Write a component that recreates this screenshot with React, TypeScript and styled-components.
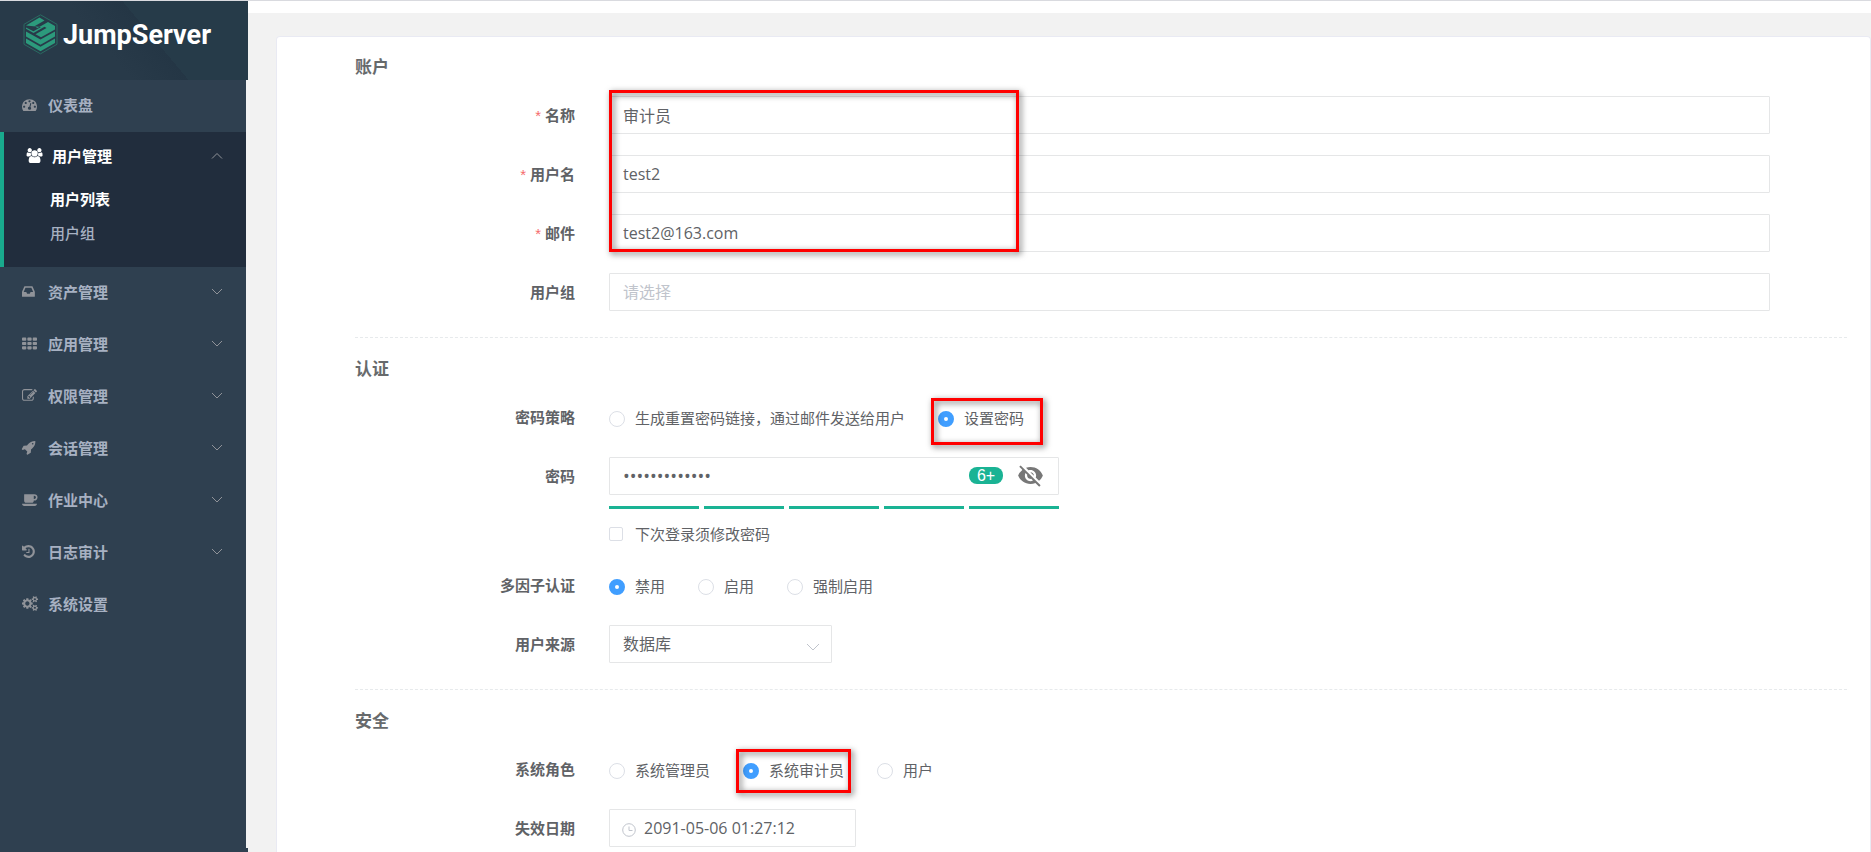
import React from 'react';
import styled, { createGlobalStyle, css } from 'styled-components';
import { MdVisibilityOff } from 'react-icons/md';

const GlobalStyle = createGlobalStyle`
  *, *::before, *::after { box-sizing: border-box; }
  body {
    margin: 0;
    background: #f2f2f2;
    color: #606266;
    font-family: 'Open Sans', 'Noto Sans CJK SC', sans-serif;
    font-size: 15px;
  }
  input, select, button { font: inherit; color: inherit; }
`;

/* ---------- shell ---------- */

const Shell = styled.div`
  display: flex;
  min-height: 100vh;
  border-top: 1px solid #d9dadf;
`;

const Sidebar = styled.aside`
  flex: none;
  display: flex;
  flex-direction: column;
  width: 248px;
  border-bottom: 4px solid #2f4050;
`;

const Brand = styled.a`
  display: flex;
  align-items: flex-start;
  gap: 5px;
  height: 79px;
  padding: 13px 0 0 23px;
  color: #fff;
  text-decoration: none;
  background: linear-gradient(50deg, #283a49 0 42%, #243645 60%, #263b49 60% 100%);
`;

const BrandName = styled.span`
  font: 700 27px/42px 'Liberation Sans Narrow', Roboto, sans-serif;
`;

const Nav = styled.nav`
  flex: 1;
  width: 246px;
  background: #2f4050;
  font-weight: 600;
  color: #a7b1c2;
`;

const MenuGroup = styled.div<{ $open?: boolean }>`
  ${(p) =>
    p.$open &&
    css`
      padding-bottom: 17px;
      border-left: 4px solid #19aa8d;
      background: #212d3d;
      color: #fff;
    `}
`;

const MenuButton = styled.button<{ $open?: boolean }>`
  display: flex;
  align-items: center;
  width: 100%;
  height: ${(p) => (p.$open ? 50 : 52)}px;
  padding: 0 23px 3px 22px;
  border: 0;
  background: none;
  font-weight: 700;
  text-align: left;
  cursor: pointer;
`;

const MenuIcon = styled.svg<{ $open?: boolean }>`
  flex: none;
  width: 17px;
  height: 15px;
  margin-right: 9px;
  overflow: visible;
  fill: ${(p) => (p.$open ? '#fff' : '#909399')};
`;

const MenuText = styled.span`
  flex: 1;
`;

const SubLink = styled.a<{ $active?: boolean }>`
  display: block;
  padding-left: 46px;
  line-height: 34px;
  font-weight: ${(p) => (p.$active ? 700 : 500)};
  color: ${(p) => (p.$active ? '#fff' : '#a7b1c2')};
  text-decoration: none;
`;

const Main = styled.main`
  flex: 1;
  display: flex;
  flex-direction: column;
  min-width: 0;
`;

const TopStrip = styled.div`
  height: 12px;
  background: #fff;
`;

const Card = styled.form`
  flex: 1;
  margin: 23px 0 0 28px;
  padding: 19px 23px 3px 78px;
  border: 1px solid #e9eaf3;
  border-bottom: 0;
  border-radius: 4px 4px 0 0;
  background: #fff;
`;

/* ---------- form ---------- */

const Section = styled.section`
  & + & {
    margin-top: 26px;
    padding-top: 20px;
    border-top: 1px dashed #e7eaec;
  }
`;

const SectionTitle = styled.h3`
  margin: 0 0 18px;
  font-size: 17px;
  line-height: 22px;
  font-weight: 700;
  color: #676a6c;
`;

const Rows = styled.div`
  position: relative;
  display: flex;
  flex-direction: column;
  gap: 21px;
  & + & {
    margin-top: 21px;
  }
`;

const Row = styled.div`
  display: grid;
  grid-template-columns: 220px minmax(0, 1fr);
  column-gap: 34px;
  padding-right: 77px;
`;

const Label = styled.label<{ $required?: boolean }>`
  height: 38px;
  line-height: 38px;
  font-weight: 700;
  text-align: right;
  ${(p) =>
    p.$required &&
    css`
      &::before {
        content: '*';
        margin-right: 4px;
        color: #f56c6c;
        font-family: 'Liberation Sans', sans-serif;
        font-weight: 400;
        line-height: 1;
      }
    `}
`;

const field = css`
  width: 100%;
  height: 38px;
  padding: 0 13px;
  border: 1px solid #e5e6e7;
  border-radius: 1px;
  outline: none;
  background: #fff;
  font-size: 16px;
  color: #606266;
`;

const TextInput = styled.input`
  ${field}
  &::placeholder {
    color: #c0c4cc;
    opacity: 1;
  }
`;

const PasswordInput = styled(TextInput)`
  font-size: 18px;
`;

const SelectInput = styled.select`
  ${field}
  appearance: none;
`;

const FieldBox = styled.div<{ $width: number }>`
  position: relative;
  width: ${(p) => p.$width}px;
  max-width: 100%;
`;

const SelectArrow = styled.svg`
  position: absolute;
  top: 18px;
  right: 12px;
  width: 14px;
  height: 8px;
  pointer-events: none;
`;

const ClockIcon = styled.svg`
  position: absolute;
  top: 14px;
  left: 13px;
  width: 14px;
  height: 14px;
`;

const DateInput = styled(TextInput)`
  padding-left: 34px;
`;

const PasswordTools = styled.div`
  position: absolute;
  top: 0;
  right: 15px;
  display: flex;
  align-items: center;
  gap: 14px;
  height: 36px;
`;

const LengthBadge = styled.span`
  width: 34px;
  border-radius: 8px;
  background: #1ab394;
  color: #fff;
  font: 16px/17px 'Liberation Sans', sans-serif;
  text-align: center;
`;

const EyeButton = styled.button`
  display: flex;
  padding: 0;
  border: 0;
  background: none;
  color: #777;
  font-size: 27px;
`;

const StrengthBar = styled.div`
  display: grid;
  grid-template-columns: 9fr 8fr 9fr 8fr 9fr;
  gap: 5px;
  margin-top: 11px;
`;

const StrengthStep = styled.span`
  height: 3px;
  background: #1ab394;
`;

const Options = styled.div`
  display: flex;
  flex-wrap: wrap;
  gap: 0 33px;
`;

const Option = styled.label`
  position: relative;
  display: flex;
  align-items: center;
  gap: 10px;
  height: 38px;
  cursor: pointer;
`;

const RadioDot = styled.input`
  appearance: none;
  width: 16px;
  height: 16px;
  margin: 4px 0 0;
  border: 1px solid #dcdfe6;
  border-radius: 50%;
  background: #fff;
  &:checked {
    border: 6px solid #409eff;
  }
`;

const CheckOption = styled(Option)`
  height: 24px;
  margin-top: 12px;
`;

const CheckBox = styled.input`
  appearance: none;
  width: 14px;
  height: 14px;
  margin: 2px 2px 0 0;
  border: 1px solid #dcdfe6;
  border-radius: 2px;
  background: #fff;
`;

const Callout = styled.span<{ $inset: string; $width?: number }>`
  position: absolute;
  inset: ${(p) => p.$inset};
  width: ${(p) => (p.$width ? `${p.$width}px` : 'auto')};
  border: 3px solid #f00;
  filter: drop-shadow(2px 2px 3px rgba(0, 0, 0, 0.6));
  pointer-events: none;
`;

/* ---------- drawings ---------- */

type Glyph = { box: number; d: string; x?: number };

const glyphs: Record<string, Glyph> = {
  dashboard: {
    box: 1792,
    d: 'M384 1152q0-53-37.5-90.5t-90.5-37.5-90.5 37.5-37.5 90.5 37.5 90.5 90.5 37.5 90.5-37.5 37.5-90.5zm192-448q0-53-37.5-90.5t-90.5-37.5-90.5 37.5-37.5 90.5 37.5 90.5 90.5 37.5 90.5-37.5 37.5-90.5zm428 481l101-382q6-26-7.5-48.5t-38.5-29.5-48 6.5-30 39.5l-101 382q-60 5-107 43.5t-63 98.5q-20 77 20 146t117 89 146-20 89-117q16-60-6-117t-72-91zm660-33q0-53-37.5-90.5t-90.5-37.5-90.5 37.5-37.5 90.5 37.5 90.5 90.5 37.5 90.5-37.5 37.5-90.5zm-640-640q0-53-37.5-90.5t-90.5-37.5-90.5 37.5-37.5 90.5 37.5 90.5 90.5 37.5 90.5-37.5 37.5-90.5zm448 192q0-53-37.5-90.5t-90.5-37.5-90.5 37.5-37.5 90.5 37.5 90.5 90.5 37.5 90.5-37.5 37.5-90.5zm320 448q0 261-141 483-19 29-54 29h-1402q-35 0-54-29-141-221-141-483 0-182 71-348t191-286 286-191 348-71 348 71 286 191 191 286 71 348z',
  },
  users: {
    box: 1920,
    d: 'M657 896q-162 5-265 128h-134q-82 0-138-40.5t-56-118.5q0-353 124-353 6 0 43.5 21t97.5 42.5 119 21.5q67 0 133-23-5 37-5 66 0 139 81 256zm1071 637q0 120-73 189.5t-194 69.5h-874q-121 0-194-69.5t-73-189.5q0-53 3.5-103.5t14-109 26.5-108.5 43-97.5 62-81 85.5-53.5 111.5-20q10 0 43 21.5t73 48 107 48 135 21.5 135-21.5 107-48 73-48 43-21.5q61 0 111.5 20t85.5 53.5 62 81 43 97.5 26.5 108.5 14 109 3.5 103.5zm-1024-1277q0 106-75 181t-181 75-181-75-75-181 75-181 181-75 181 75 75 181zm704 384q0 159-112.5 271.5t-271.5 112.5-271.5-112.5-112.5-271.5 112.5-271.5 271.5-112.5 271.5 112.5 112.5 271.5zm576 225q0 78-56 118.5t-138 40.5h-134q-103-123-265-128 81-117 81-256 0-29-5-66 66 23 133 23 59 0 119-21.5t97.5-42.5 43.5-21q124 0 124 353zm-128-609q0 106-75 181t-181 75-181-75-75-181 75-181 181-75 181 75 75 181z',
  },
  inbox: {
    box: 1792,
    x: 128,
    d: 'M1151 960h316q-1-3-2.5-8t-2.5-8l-212-496h-708l-212 496q-1 2-2.5 8t-2.5 8h316l95 192h320zm513 30v482q0 26-19 45t-45 19h-1408q-26 0-45-19t-19-45v-482q0-62 25-123l238-552q10-25 36.5-42t52.5-17h832q26 0 52.5 17t36.5 42l238 552q25 61 25 123z',
  },
  th: {
    box: 1792,
    d: 'M96 192h320q96 0 96 96v192q0 96-96 96h-320q-96 0-96-96v-192q0-96 96-96zM736 192h320q96 0 96 96v192q0 96-96 96h-320q-96 0-96-96v-192q0-96 96-96zM1376 192h320q96 0 96 96v192q0 96-96 96h-320q-96 0-96-96v-192q0-96 96-96zM96 704h320q96 0 96 96v192q0 96-96 96h-320q-96 0-96-96v-192q0-96 96-96zM736 704h320q96 0 96 96v192q0 96-96 96h-320q-96 0-96-96v-192q0-96 96-96zM1376 704h320q96 0 96 96v192q0 96-96 96h-320q-96 0-96-96v-192q0-96 96-96zM96 1216h320q96 0 96 96v192q0 96-96 96h-320q-96 0-96-96v-192q0-96 96-96zM736 1216h320q96 0 96 96v192q0 96-96 96h-320q-96 0-96-96v-192q0-96 96-96zM1376 1216h320q96 0 96 96v192q0 96-96 96h-320q-96 0-96-96v-192q0-96 96-96z',
  },
  edit: {
    box: 1792,
    d: 'M888 1184l116-116-152-152-116 116v56h96v96h56zm440-720q-16-16-33 1l-350 350q-17 17-1 33t33-1l350-350q17-17 1-33zm80 594v190q0 119-84.5 203.5t-203.5 84.5h-832q-119 0-203.5-84.5t-84.5-203.5v-832q0-119 84.5-203.5t203.5-84.5h832q63 0 117 25 15 7 18 23 3 17-9 29l-49 49q-14 14-32 8-23-6-45-6h-832q-66 0-113 47t-47 113v832q0 66 47 113t113 47h832q66 0 113-47t47-113v-126q0-13 9-22l64-64q15-15 35-7t20 29zm-96-738l288 288-672 672h-288v-288zm444 132l-92 92-288-288 92-92q28-28 68-28t68 28l152 152q28 28 28 68t-28 68z',
  },
  rocket: {
    box: 1792,
    x: 64,
    d: 'M1440 448q0-40-28-68t-68-28-68 28-28 68 28 68 68 28 68-28 28-68zm224-288q0 249-75.5 430.5t-253.5 360.5q-81 80-195 176l-20 379q-2 16-16 26l-384 224q-7 4-16 4-12 0-23-9l-64-64q-13-14-8-32l85-276-281-281-276 85q-3 1-9 1-14 0-23-9l-64-64q-17-19-5-39l224-384q10-14 26-16l379-20q96-114 176-195 188-187 358-258t431-71q14 0 24 9.5t10 22.5z',
  },
  coffee: {
    box: 1920,
    d: 'M1664 640q0-80-56-136t-136-56h-64v384h64q80 0 136-56t56-136zm-1664 768h1792q0 106-75 181t-181 75h-1280q-106 0-181-75t-75-181zm1856-768q0 159-112.5 271.5t-271.5 112.5h-64v32q0 92-66 158t-158 66h-704q-92 0-158-66t-66-158v-736q0-26 19-45t45-19h1152q159 0 271.5 112.5t112.5 271.5z',
  },
  history: {
    box: 1792,
    x: 128,
    d: 'M1664 896q0 156-61 298t-164 245-245 164-298 61q-172 0-327-72.5t-264-204.5q-7-10-6.5-22.5t8.5-20.5l137-138q10-9 25-9 16 2 23 12 73 95 179 147t225 52q104 0 198.5-40.5t163.5-109.5 109.5-163.5 40.5-198.5-40.5-198.5-109.5-163.5-163.5-109.5-198.5-40.5q-98 0-188 35.5t-160 101.5l137 138q31 30 14 69-17 40-59 40h-448q-26 0-45-19t-19-45v-448q0-42 40-59 39-17 69 14l130 129q107-101 244.5-156.5t284.5-55.5q156 0 298 61t245 164 164 245 61 298zm-640-288v448q0 14-9 23t-23 9h-320q-14 0-23-9t-9-23v-64q0-14 9-23t23-9h224v-352q0-14 9-23t23-9h64q14 0 23 9t9 23z',
  },
  cogs: {
    box: 1920,
    d: 'M896 896q0-106-75-181t-181-75-181 75-75 181 75 181 181 75 181-75 75-181zm768 512q0-52-38-90t-90-38-90 38-38 90q0 53 37.5 90.5t90.5 37.5 90.5-37.5 37.5-90.5zm0-1024q0-52-38-90t-90-38-90 38-38 90q0 53 37.5 90.5t90.5 37.5 90.5-37.5 37.5-90.5zm-384 421v185q0 10-7 19.5t-16 10.5l-155 24q-11 35-32 76 34 48 90 115 7 11 7 20 0 12-7 19-23 30-82.5 89.5t-78.5 59.5q-11 0-21-7l-115-90q-37 19-77 31-11 108-23 155-7 24-30 24h-186q-11 0-20-7.5t-10-17.5l-23-153q-34-10-75-31l-118 89q-7 7-20 7-11 0-21-8-144-133-144-160 0-9 7-19 10-14 41-53t47-61q-23-44-35-82l-152-24q-10-1-17-9.5t-7-19.5v-185q0-10 7-19.5t16-10.5l155-24q11-35 32-76-34-48-90-115-7-11-7-20 0-12 7-20 22-30 82-89t79-59q11 0 21 7l115 90q34-18 77-32 11-108 23-154 7-24 30-24h186q11 0 20 7.5t10 17.5l23 153q34 10 75 31l118-89q8-7 20-7 11 0 21 8 144 133 144 160 0 8-7 19-12 16-42 54t-45 60q23 48 34 82l152 23q10 2 17 10.5t7 19.5zm640 533v140q0 16-149 31-12 27-30 52 51 113 51 138 0 4-4 7-122 71-124 71-8 0-46-47t-52-68q-20 2-30 2t-30-2q-14 21-52 68t-46 47q-2 0-124-71-4-3-4-7 0-25 51-138-18-25-30-52-149-15-149-31v-140q0-16 149-31 13-29 30-52-51-113-51-138 0-4 4-7 4-2 35-20t59-34 30-16q8 0 46 46.5t52 67.5q20-2 30-2t30 2q51-71 92-112l6-2q4 0 124 70 4 3 4 7 0 25-51 138 17 23 30 52 149 15 149 31zm0-1024v140q0 16-149 31-12 27-30 52 51 113 51 138 0 4-4 7-122 71-124 71-8 0-46-47t-52-68q-20 2-30 2t-30-2q-14 21-52 68t-46 47q-2 0-124-71-4-3-4-7 0-25 51-138-18-25-30-52-149-15-149-31v-140q0-16 149-31 13-29 30-52-51-113-51-138 0-4 4-7 4-2 35-20t59-34 30-16q8 0 46 46.5t52 67.5q20-2 30-2t30 2q51-71 92-112l6-2q4 0 124 70 4 3 4 7 0 25-51 138 17 23 30 52 149 15 149 31z',
  },
};

const NavGlyph = ({ name, open }: { name: string; open?: boolean }) => {
  const g = glyphs[name];
  return (
    <MenuIcon
      $open={open}
      viewBox={`${g.x ?? 0} 0 ${g.box} 1792`}
      preserveAspectRatio="xMinYMid meet"
      aria-hidden="true"
    >
      <path d={g.d} />
    </MenuIcon>
  );
};

const Caret = ({ up }: { up?: boolean }) => (
  <svg width="12" height="8" viewBox="0 0 12 8" fill="none" stroke="#909399" aria-hidden="true">
    <path d={up ? 'M1 6.5L6 1.5L11 6.5' : 'M1 1L6 6L11 1'} />
  </svg>
);

const LogoMark = () => (
  <svg width="35" height="41" viewBox="0 0 35 41" fill="none" aria-hidden="true">
    <path d="M17.5 0.8L34 10.3V30.3L17.5 39.8L1 30.3V10.3Z" stroke="#2a6b62" strokeWidth="1" />
    <path
      d="M3 11.5L16.5 3.6L21.5 6.4L11.5 12.2L14.5 14L21.5 10L25 8L32 12V15.5L18 23.3L12.5 20.2L23.5 14L21.5 12.8L10.5 19L3 14.8V13.6L10.5 17.2L18 13Z"
      fill="#2c9a7c"
    />
    <path d="M3 17.5L17.5 25.5L32 17.5V22.5L17.5 30.8L3 22.5Z" fill="#2c9a7c" />
    <path d="M3 24.5L17.5 32.8L32 24.5V29L17.5 37.3L3 29Z" fill="#2c9a7c" />
  </svg>
);

/* ---------- parts ---------- */

const lowerMenu: [string, string, boolean][] = [
  ['inbox', '资产管理', true],
  ['th', '应用管理', true],
  ['edit', '权限管理', true],
  ['rocket', '会话管理', true],
  ['coffee', '作业中心', true],
  ['history', '日志审计', true],
  ['cogs', '系统设置', false],
];

const MenuItem = ({ icon, text, nested }: { icon: string; text: string; nested?: boolean }) => (
  <MenuGroup>
    <MenuButton type="button">
      <NavGlyph name={icon} />
      <MenuText>{text}</MenuText>
      {nested && <Caret />}
    </MenuButton>
  </MenuGroup>
);

type RadioProps = {
  name: string;
  text: string;
  checked?: boolean;
  callout?: string;
};

const Radio = ({ name, text, checked, callout }: RadioProps) => (
  <Option>
    <RadioDot type="radio" name={name} defaultChecked={checked} />
    {text}
    {callout && <Callout $inset={callout} />}
  </Option>
);

const TextRow = ({ id, label, value, required, placeholder }: {
  id: string;
  label: string;
  value?: string;
  required?: boolean;
  placeholder?: string;
}) => (
  <Row>
    <Label htmlFor={id} $required={required}>{label}</Label>
    <TextInput id={id} defaultValue={value} placeholder={placeholder} />
  </Row>
);

const RadioRow = ({ id, label, children }: { id: string; label: string; children: React.ReactNode }) => (
  <Row>
    <Label as="span" id={id}>{label}</Label>
    <Options role="radiogroup" aria-labelledby={id}>{children}</Options>
  </Row>
);

export default function App() {
  return (
    <>
      <GlobalStyle />
      <Shell>
        <Sidebar>
          <Brand href="#home">
            <LogoMark />
            <BrandName>JumpServer</BrandName>
          </Brand>
          <Nav>
            <MenuItem icon="dashboard" text="仪表盘" />
            <MenuGroup $open>
              <MenuButton type="button" $open aria-expanded="true">
                <NavGlyph name="users" open />
                <MenuText>用户管理</MenuText>
                <Caret up />
              </MenuButton>
              <SubLink href="#users" $active>用户列表</SubLink>
              <SubLink href="#groups">用户组</SubLink>
            </MenuGroup>
            {lowerMenu.map(([icon, text, nested]) => (
              <MenuItem key={icon} icon={icon} text={text} nested={nested} />
            ))}
          </Nav>
        </Sidebar>
        <Main>
          <TopStrip />
          <Card>
            <Section>
              <SectionTitle>账户</SectionTitle>
              <Rows>
                <TextRow id="name" label="名称" value="审计员" required />
                <TextRow id="username" label="用户名" value="test2" required />
                <TextRow id="email" label="邮件" value="test2@163.com" required />
                <Callout $inset="-6px auto 0 254px" $width={410} />
              </Rows>
              <Rows>
                <TextRow id="group" label="用户组" placeholder="请选择" />
              </Rows>
            </Section>

            <Section>
              <SectionTitle>认证</SectionTitle>
              <Rows>
                <RadioRow id="strategy" label="密码策略">
                  <Radio name="strategy" text="生成重置密码链接，通过邮件发送给用户" />
                  <Radio name="strategy" text="设置密码" checked callout="0 -19px -9px -7px" />
                </RadioRow>
                <Row>
                  <Label htmlFor="password">密码</Label>
                  <div>
                    <FieldBox $width={450}>
                      <PasswordInput id="password" type="password" defaultValue="Auditor@2021x" />
                      <PasswordTools>
                        <LengthBadge>6+</LengthBadge>
                        <EyeButton type="button" aria-label="显示密码">
                          <MdVisibilityOff />
                        </EyeButton>
                      </PasswordTools>
                      <StrengthBar>
                        <StrengthStep />
                        <StrengthStep />
                        <StrengthStep />
                        <StrengthStep />
                        <StrengthStep />
                      </StrengthBar>
                    </FieldBox>
                    <CheckOption>
                      <CheckBox type="checkbox" />
                      下次登录须修改密码
                    </CheckOption>
                  </div>
                </Row>
                <RadioRow id="mfa" label="多因子认证">
                  <Radio name="mfa" text="禁用" checked />
                  <Radio name="mfa" text="启用" />
                  <Radio name="mfa" text="强制启用" />
                </RadioRow>
                <Row>
                  <Label htmlFor="source">用户来源</Label>
                  <FieldBox $width={223}>
                    <SelectInput id="source" defaultValue="db">
                      <option value="db">数据库</option>
                    </SelectInput>
                    <SelectArrow viewBox="0 0 14 8" fill="none" stroke="#c0c4cc" aria-hidden="true">
                      <path d="M1 1L7 7L13 1" />
                    </SelectArrow>
                  </FieldBox>
                </Row>
              </Rows>
            </Section>

            <Section>
              <SectionTitle>安全</SectionTitle>
              <Rows>
                <RadioRow id="role" label="系统角色">
                  <Radio name="role" text="系统管理员" />
                  <Radio name="role" text="系统审计员" checked callout="-1px -7px -5px -7px" />
                  <Radio name="role" text="用户" />
                </RadioRow>
                <Row>
                  <Label htmlFor="expires">失效日期</Label>
                  <FieldBox $width={247}>
                    <DateInput id="expires" defaultValue="2091-05-06 01:27:12" />
                    <ClockIcon viewBox="0 0 14 14" fill="none" stroke="#c0c4cc" aria-hidden="true">
                      <circle cx="7" cy="7" r="6.3" />
                      <path d="M7 3.5V7.5H10.5" />
                    </ClockIcon>
                  </FieldBox>
                </Row>
              </Rows>
            </Section>
          </Card>
        </Main>
      </Shell>
    </>
  );
}
